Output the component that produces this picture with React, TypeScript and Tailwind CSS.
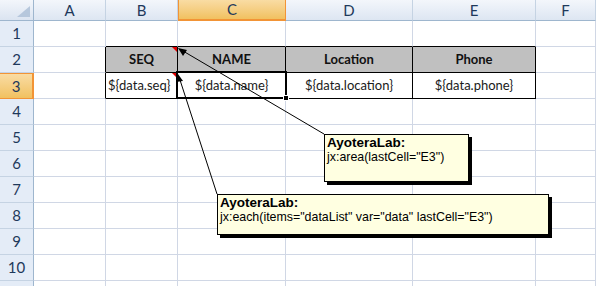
import React from "react";

const columns = [
  { label: "A", w: "w-[72px]" },
  { label: "B", w: "w-[72px]" },
  { label: "C", w: "w-[108px]" },
  { label: "D", w: "w-[127px]" },
  { label: "E", w: "w-[123px]" },
  { label: "F", w: "flex-1" },
];

const rows = [1, 2, 3, 4, 5, 6, 7, 8, 9, 10, 11];

// table area is B2:E3
const header = ["SEQ", "NAME", "Location", "Phone"];
const body = ["${data.seq}", "${data.name}", "${data.location}", "${data.phone}"];

function Cell({ row, col }: { row: number; col: number }) {
  const inTable = row >= 2 && row <= 3 && col >= 1 && col <= 4;
  const leftOfTable = col === 0 && (row === 2 || row === 3);
  const aboveTable = row === 1 && col >= 1 && col <= 4;
  const width = columns[col].w;

  let cls = `${width} h-full shrink-0 border-r border-b border-[#d0d7e5] relative`;
  if (leftOfTable) cls = `${width} h-full shrink-0 border-r border-r-black border-b border-b-[#d0d7e5] relative`;
  if (aboveTable) cls = `${width} h-full shrink-0 border-r border-r-[#d0d7e5] border-b border-b-black relative`;
  if (inTable) cls = `${width} h-full shrink-0 border-r border-b border-black relative flex items-center`;

  if (!inTable) return <div className={cls} />;

  const isHead = row === 2;
  const text = isHead ? header[col - 1] : body[col - 1];
  const hasNote = col === 1;

  return (
    <div className={`${cls} ${isHead ? "bg-[#c0c0c0] font-bold text-[#111]" : "text-[#1a1a1a]"} ${col === 1 && !isHead ? "justify-start pl-[2px]" : "justify-center"}`}>
      <span className="text-[13px] leading-none">{text}</span>
      {hasNote && (
        <div className="absolute top-0 right-0 w-0 h-0 border-t-[5px] border-t-[#e00000] border-l-[5px] border-l-transparent" />
      )}
    </div>
  );
}

export default function App() {
  return (
    <div className="relative w-[596px] h-[286px] overflow-hidden bg-white" style={{ fontFamily: "Lato, 'Liberation Sans', sans-serif" }}>
      {/* column headers */}
      <div className="flex h-[21px]">
        <div className="w-[34px] h-full shrink-0 border-r border-b border-[#9eb6ce] bg-gradient-to-b from-[#f3f6fb] to-[#dbe4f1] flex items-end justify-end p-[3px]">
          <svg width="13" height="11" viewBox="0 0 13 11">
            <polygon points="13,0 13,11 0,11" fill="#b6c7dc" />
          </svg>
        </div>
        {columns.map((c) =>
          c.label === "C" ? (
            <div
              key={c.label}
              className={`${c.w} h-full shrink-0 border-x border-b-2 border-[#f29436] bg-gradient-to-b from-[#f9dca3] to-[#f1c15f] flex items-center justify-center text-[15px] text-[#1e395b]`}
            >
              {c.label}
            </div>
          ) : (
            <div
              key={c.label}
              className={`${c.w} h-full shrink-0 border-r border-r-[#c5d3e3] border-b border-b-[#9eb6ce] bg-gradient-to-b from-[#f3f6fb] to-[#dde6f2] flex items-center justify-center text-[15px] text-[#1e395b]`}
            >
              {c.label}
            </div>
          )
        )}
      </div>

      {rows.map((r) => (
        <div key={r} className="flex h-[26px]">
          <div
            className={`w-[34px] h-full shrink-0 flex items-center justify-center text-[15px] text-[#1e395b] ${
              r === 3
                ? "border-y border-r-2 border-[#f29436] bg-gradient-to-b from-[#f9dca3] to-[#f1c15f]"
                : "border-r border-r-[#9eb6ce] border-b border-b-[#c5d3e3] bg-[#e4ecf7]"
            }`}
          >
            {r < 11 ? r : null}
          </div>
          {columns.map((c, ci) => (
            <Cell key={c.label} row={r} col={ci} />
          ))}
        </div>
      ))}

      {/* active cell C3 */}
      <div className="absolute left-[176px] top-[71px] w-[111px] h-[28px] border-2 border-black">
        <div className="w-full h-full border border-white" />
      </div>
      <div className="absolute left-[283px] top-[95px] w-[6px] h-[6px] bg-black border border-white" />

      {/* comment arrows */}
      <svg className="absolute left-0 top-0 pointer-events-none" width="596" height="286">
        <line x1="324" y1="134" x2="183" y2="51" stroke="#000" strokeWidth="1" />
        <polygon points="178,48 187,50 183,56" fill="#000" />
        <line x1="217" y1="194" x2="180" y2="80" stroke="#000" strokeWidth="1" />
        <polygon points="178,74 183,81 176,82" fill="#000" />
      </svg>

      {/* comments */}
      <div
        className="absolute left-[324px] top-[134px] w-[145px] h-[48px] bg-[#ffffe1] border border-black shadow-[3px_3px_0_#000] px-[2px] pt-[1px] text-[12.4px] leading-[14px] text-black"
        style={{ fontFamily: "'Liberation Sans', sans-serif" }}
      >
        <div className="font-bold text-[13.5px]">AyoteraLab:</div>
        <div>jx:area(lastCell="E3")</div>
      </div>
      <div
        className="absolute left-[217px] top-[194px] w-[332px] h-[41px] bg-[#ffffe1] border border-black shadow-[3px_3px_0_#000] px-[2px] pt-[1px] text-[12.4px] leading-[14px] text-black"
        style={{ fontFamily: "'Liberation Sans', sans-serif" }}
      >
        <div className="font-bold text-[13.5px]">AyoteraLab:</div>
        <div>jx:each(items="dataList" var="data" lastCell="E3")</div>
      </div>
    </div>
  );
}
